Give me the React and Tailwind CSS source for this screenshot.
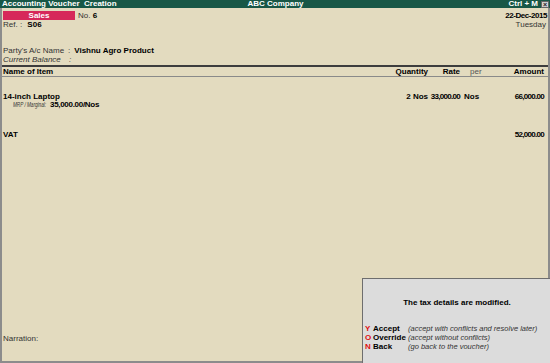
export default function App() {
  const num = "tracking-[-0.7px]";
  return (
    <div className="relative w-[550px] h-[363px] overflow-hidden bg-[#e3dbbf] font-['Liberation_Sans',Arial,sans-serif] text-[8px] leading-none text-[#333]">
      <div className="flex flex-col h-full">
        {/* Title bar */}
        <div className="h-[8px] bg-[#185746] text-white font-bold flex items-center pl-[2px] pr-[1px] text-[8px]">
          <div className="flex-1 whitespace-pre">Accounting Voucher  Creation</div>
          <div>ABC Company</div>
          <div className="flex-1 flex justify-end items-center gap-[3px]">
            <span>Ctrl + M</span>
            <span className="w-[8px] h-[7px] bg-[#d0d0d0] border border-[#666] flex items-center justify-center text-[#222] text-[7px] leading-none font-bold">×</span>
          </div>
        </div>
        {/* Body */}
        <div className="flex-1 flex flex-col border-l-2 border-r-2 border-b-2 border-[#8c8c8c]">
          <div className="h-[3px]" />
          <div className="h-[9px] flex items-center pl-[1px] pr-[1px]">
            <div className="w-[72px] h-[9px] bg-[#d6285a] text-white font-bold flex items-center justify-center">Sales</div>
            <div className="ml-[3px]">No. <span className="font-bold text-black">6</span></div>
            <div className="flex-1 text-right font-bold text-black tracking-[-0.45px]">22-Dec-2015</div>
          </div>
          <div className="h-[10px] flex items-center pl-[1px] pr-[2px]">
            <div>Ref. : <span className="ml-[3px] font-bold text-black">S06</span></div>
            <div className="flex-1 text-right">Tuesday</div>
          </div>
          <div className="h-[16px]" />
          <div className="h-[9px] flex items-center pl-[1px]">
            <span className="w-[65px]">Party's A/c Name</span>
            <span>:</span>
            <span className="ml-[4px] font-bold text-black">Vishnu Agro Product</span>
          </div>
          <div className="h-[9px] flex items-center pl-[1px] italic">
            <span className="w-[65px]">Current Balance</span>
            <span className="ml-[1px]">:</span>
          </div>
          <div className="h-[1px]" />
          {/* Header */}
          <div className="h-[12px] border-t-2 border-b border-t-[#3d3d3d] border-b-[#8a8a8a] flex items-center font-bold text-black pl-[1px]">
            <div className="flex-1">Name of Item</div>
            <div className="w-[60px] text-right">Quantity</div>
            <div className="w-[32px] text-right">Rate</div>
            <div className="w-[30px] pl-[10px] font-normal text-[#555]">per</div>
            <div className="w-[58px] text-right pr-[4px]">Amount</div>
          </div>
          <div className="h-[15px]" />
          <div className="h-[9px] flex items-center font-bold text-black pl-[1px]">
            <div className="flex-1">14-inch Laptop</div>
            <div className="w-[60px] text-right">2 Nos</div>
            <div className={`w-[32px] text-right ${num}`}>33,000.00</div>
            <div className="w-[30px] pl-[4px]">Nos</div>
            <div className={`w-[58px] text-right pr-[4px] ${num}`}>66,000.00</div>
          </div>
          <div className="h-[8px] flex items-center pl-[11px]">
            <span className="w-[37px] whitespace-nowrap">
              <span className="inline-block italic text-[8px] origin-left scale-x-[0.58]">MRP / Marginal:</span>
            </span>
            <span className="font-bold text-black tracking-[-0.3px]">35,000.00/Nos</span>
          </div>
          <div className="h-[21px]" />
          <div className="h-[9px] flex items-center font-bold text-black pl-[1px]">
            <div className="flex-1">VAT</div>
            <div className={`text-right pr-[4px] ${num}`}>52,000.00</div>
          </div>
          <div className="flex-1" />
          <div className="h-[9px] flex items-center pl-[1px]">Narration:</div>
          <div className="h-[18px]" />
        </div>
      </div>
      {/* Dialog overlay */}
      <div className="absolute left-[362px] top-[278px] w-[190px] h-[90px] bg-[#dcdcdc] border border-[#6e6e6e] text-black">
        <div className="h-[19px]" />
        <div className="h-[9px] flex items-center justify-center font-bold">The tax details are modified.</div>
        <div className="h-[17px]" />
        <div className="flex flex-col">
          <div className="h-[9px] flex items-center">
            <span className="w-[10px] pl-[2px] font-bold text-[#e01010]">Y</span>
            <span className="w-[35px] font-bold">Accept</span>
            <span className="italic text-[#333] text-[7.5px]">(accept with conflicts and resolve later)</span>
          </div>
          <div className="h-[9px] flex items-center">
            <span className="w-[10px] pl-[2px] font-bold text-[#e01010]">O</span>
            <span className="w-[35px] font-bold">Override</span>
            <span className="italic text-[#333] text-[7.5px]">(accept without conflicts)</span>
          </div>
          <div className="h-[9px] flex items-center">
            <span className="w-[10px] pl-[2px] font-bold text-[#e01010]">N</span>
            <span className="w-[35px] font-bold">Back</span>
            <span className="italic text-[#333] text-[7.5px]">(go back to the voucher)</span>
          </div>
        </div>
      </div>
    </div>
  );
}
